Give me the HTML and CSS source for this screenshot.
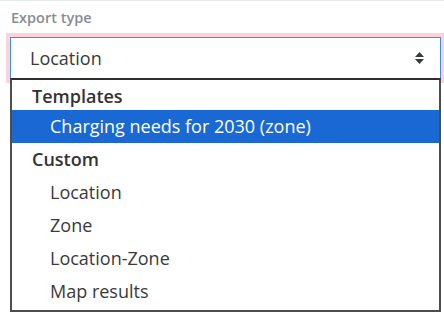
FILE: index.html
```html
<!DOCTYPE html>
<html lang="en">
<head>
    <meta charset="UTF-8">
    <meta name="viewport" content="width=device-width, initial-scale=1.0">
    <title>Export</title>
    <link rel="stylesheet" href="styles.css">
</head>
<body>
<div class="panel">
    <label class="field-label" for="exportType">Export type</label>
    <div class="select" id="exportType">
        <span>Location</span>
        <svg class="arrows" width="9" height="12" viewBox="0 0 9 12">
            <path d="M4.5 0 L9 5 L0 5 Z" fill="#343a40"/>
            <path d="M0 7 L9 7 L4.5 12 Z" fill="#343a40"/>
        </svg>
    </div>
    <div class="dropdown">
        <div class="group">Templates</div>
        <div class="option selected">Charging needs for 2030 (zone)</div>
        <div class="group">Custom</div>
        <div class="option">Location</div>
        <div class="option">Zone</div>
        <div class="option">Location-Zone</div>
        <div class="option">Map results</div>
    </div>
</div>
</body>
</html>
```

FILE: styles.css
```css
body {
    margin: 0;
    font-family: "Open Sans", "DejaVu Sans", sans-serif;
    background-color: #fff;
    color: #333;
}
.panel {
    border-top: 1px solid #e6e9ec;
    padding: 6px 3px 0 10px;
}
.field-label {
    display: block;
    padding-left: 1px;
    font-size: 14.5px;
    font-weight: 600;
    line-height: 22px;
    color: #878d93;
    margin-bottom: 8px;
}
.select {
    display: flex;
    align-items: center;
    justify-content: space-between;
    height: 40px;
    padding: 0 16px 0 19px;
    border: 1px solid #3c8ee0;
    box-shadow: 0 0 0 4px #fbd3da;
    font-size: 18px;
    color: #3a3a3a;
}
.arrows {
    display: block;
}
.dropdown {
    position: relative;
    z-index: 1;
    margin-top: -1px;
    background-color: #fff;
    border: 2px solid #4d4d4d;
    border-top-color: #2e2e2e;
    padding-bottom: 2px;
    font-size: 18px;
}
.group {
    height: 30px;
    line-height: 33px;
    padding-left: 20px;
    font-weight: 600;
    color: #333;
}
.group + .option + .group {
    height: 33px;
    line-height: 33px;
}
.option {
    height: 33px;
    line-height: 32px;
    padding-left: 38px;
    color: #3a3a3a;
}
.option.selected {
    background-color: #1a68d3;
    color: #fff;
}
```
